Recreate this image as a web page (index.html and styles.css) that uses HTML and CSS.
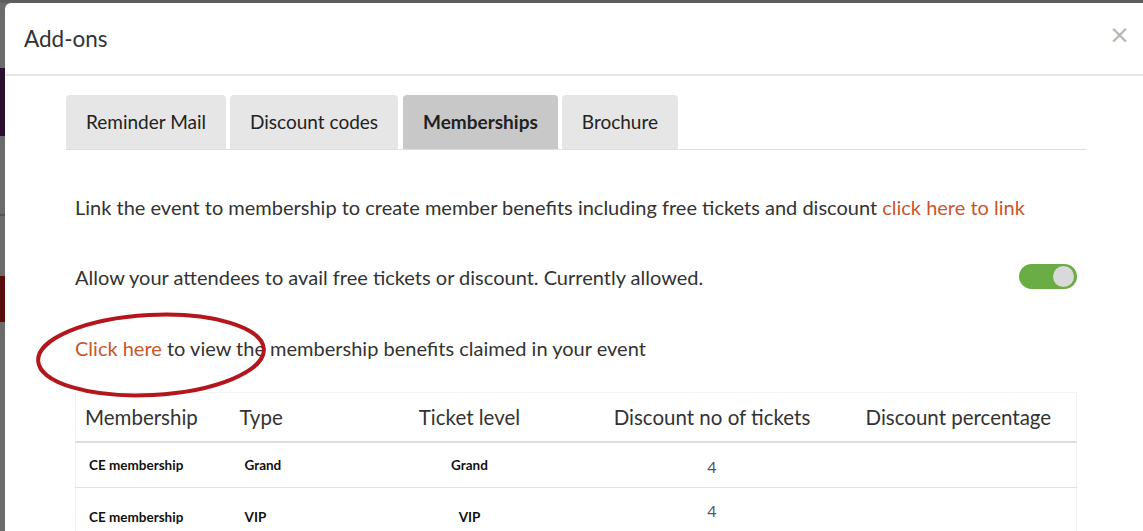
FILE: index.html
```html
<!DOCTYPE html>
<html lang="en">

<head>
    <meta charset="UTF-8">
    <meta name="viewport" content="width=device-width, initial-scale=1.0">
    <title>Add-ons</title>
    <link rel="stylesheet" href="styles.css">
</head>

<body>
    <div class="modal">
        <div class="modal-header">
            <h4 class="modal-title">Add-ons</h4>
            <button class="close">&times;</button>
        </div>

        <div class="modal-body">
            <ul class="tabs">
                <li class="tab">Reminder Mail</li>
                <li class="tab">Discount codes</li>
                <li class="tab active">Memberships</li>
                <li class="tab">Brochure</li>
            </ul>

            <div class="pane">
                <p class="line">Link the event to membership to create member benefits including free tickets and discount <a href="#">click here to link</a></p>

                <div class="line toggle-row">
                    <span>Allow your attendees to avail free tickets or discount. Currently allowed.</span>
                    <span class="toggle"><span class="knob"></span></span>
                </div>

                <p class="line claimed">
                    <a href="#">Click here</a> to view the membership benefits claimed in your event
                    <svg class="circle-mark" width="240" height="94" viewBox="0 0 240 94">
                        <ellipse cx="118" cy="46" rx="113" ry="40" transform="rotate(-3 118 46)" fill="none" stroke="#b3161c" stroke-width="4"/>
                    </svg>
                </p>

                <table class="benefits">
                    <thead>
                        <tr>
                            <th class="c-name">Membership</th>
                            <th class="c-type">Type</th>
                            <th class="c-level">Ticket level</th>
                            <th class="c-count">Discount no of tickets</th>
                            <th class="c-pct">Discount percentage</th>
                        </tr>
                    </thead>
                    <tbody>
                        <tr>
                            <td class="c-name">CE membership</td>
                            <td class="c-type">Grand</td>
                            <td class="c-level">Grand</td>
                            <td class="c-count">4</td>
                            <td class="c-pct"></td>
                        </tr>
                        <tr class="tall">
                            <td class="c-name">CE membership</td>
                            <td class="c-type">VIP</td>
                            <td class="c-level">VIP</td>
                            <td class="c-count">4</td>
                            <td class="c-pct"></td>
                        </tr>
                    </tbody>
                </table>
            </div>
        </div>
    </div>
</body>

</html>
```

FILE: styles.css
```css
* {
    box-sizing: border-box;
    margin: 0;
    padding: 0;
}

body {
    height: 531px;
    overflow: hidden;
    padding: 3px 0 0 5px;
    font-family: Lato, "Open Sans", sans-serif;
    color: #333;
    background: linear-gradient(to bottom,
        #5d5d5d 0, #5d5d5d 3px,
        #6b6b6b 3px, #6b6b6b 68px,
        #2c0f2c 68px, #2c0f2c 136px,
        #6b6b6b 136px, #6b6b6b 214px,
        #555 214px, #555 216px,
        #6b6b6b 216px, #6b6b6b 276px,
        #5a0d0d 276px, #5a0d0d 322px,
        #6b6b6b 322px);
}

.modal {
    width: 1138px;
    height: 560px;
    background-color: #fff;
    border-radius: 6px 0 0 0;
}

.modal-header {
    display: flex;
    justify-content: space-between;
    align-items: center;
    height: 73px;
    padding: 0 13px 0 19px;
    border-bottom: 2px solid #e6e6e6;
}

.modal-title {
    font-size: 22.5px;
    font-weight: 400;
    color: #333;
    margin-top: -1px;
}

.close {
    border: none;
    background: none;
    font-family: "DejaVu Sans", sans-serif;
    font-size: 25px;
    line-height: 1;
    color: #b5b5b5;
    margin-top: -9px;
}

.modal-body {
    padding: 19px 57px 0 61px;
}

.tabs {
    display: flex;
    gap: 4px;
    list-style: none;
    border-bottom: 1px solid #ddd;
}

.tab {
    height: 54px;
    line-height: 54px;
    padding: 0 20px;
    font-size: 19px;
    background-color: #e6e6e6;
    border-radius: 4px 4px 0 0;
    color: #222;
}

.tab.active {
    background-color: #c8c8c8;
    font-weight: 700;
    margin-left: 1px;
}

.pane {
    padding: 0 9px 0 9px;
}

.line {
    font-size: 20px;
    line-height: 24px;
}

.pane > p:first-child {
    margin-top: 45px;
}

.line a {
    color: #c9552c;
    text-decoration: none;
}

.toggle-row {
    display: flex;
    justify-content: space-between;
    align-items: center;
    margin-top: 45px;
}

.toggle {
    display: flex;
    justify-content: flex-end;
    align-items: center;
    width: 58px;
    height: 25px;
    padding: 0 3px;
    border-radius: 13px;
    background-color: #6aad45;
}

.knob {
    width: 21px;
    height: 21px;
    border-radius: 50%;
    background-color: #d9d9d9;
}

.claimed {
    position: relative;
    margin-top: 47px;
}

.circle-mark {
    position: absolute;
    left: -42px;
    top: -27px;
}

.benefits {
    width: 100%;
    margin-top: 32px;
    border-collapse: collapse;
    border: 1px solid #f3f3f3;
    table-layout: fixed;
}

.benefits th {
    height: 49px;
    font-size: 20.5px;
    font-weight: 400;
    color: #333;
    border-bottom: 2px solid #ddd;
}

.benefits td {
    height: 46px;
    font-size: 13.5px;
    font-weight: 700;
    color: #111;
    border-bottom: 1px solid #e2e2e2;
}

.benefits tr.tall td {
    height: 56px;
    padding-top: 2px;
}

.c-name {
    width: 155px;
    text-align: left;
    padding-left: 9px;
}

td.c-name {
    padding-left: 13px;
}

.c-type {
    width: 150px;
    text-align: left;
    padding-left: 9px;
}

td.c-type {
    padding-left: 14px;
}

.c-level {
    width: 178px;
    text-align: center;
}

.c-count {
    width: 307px;
    text-align: center;
}

.benefits td.c-count {
    font-size: 16px;
    font-weight: 400;
    color: #555;
    padding-top: 4px;
}

.benefits tr.tall td.c-count {
    padding-top: 0;
    padding-bottom: 10px;
}

.c-pct {
    text-align: left;
    padding-left: 0;
}
```
